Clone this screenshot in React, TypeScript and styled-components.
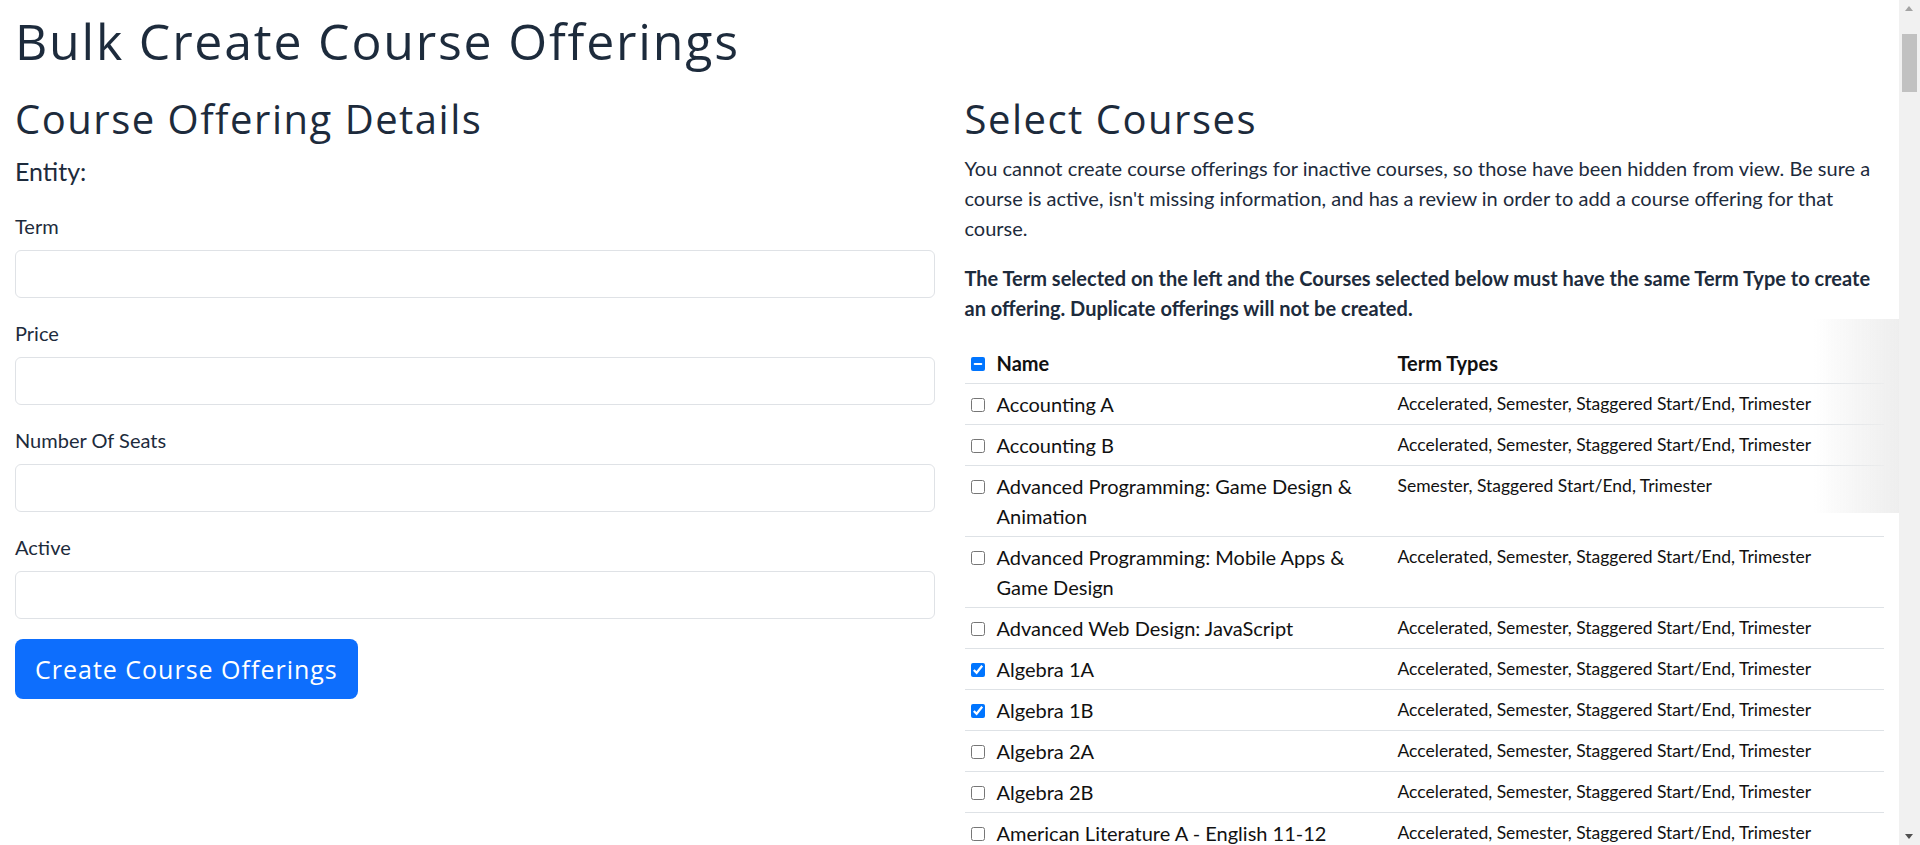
import React from "react";
import styled, { createGlobalStyle } from "styled-components";

const GlobalStyle = createGlobalStyle`
  html, body {
    margin: 0;
    padding: 0;
    overflow: hidden;
    background: #ffffff;
  }
  body {
    font-family: Lato, "Open Sans", sans-serif;
    font-size: 20px;
    line-height: 1.5;
    color: #1d2b3c;
  }
  *, *::before, *::after { box-sizing: border-box; }
`;

const Page = styled.div`
  margin-right: 21px;
  padding: 0 15px;
`;

const Title = styled.h1`
  font-family: "Open Sans", sans-serif;
  font-weight: 500;
  font-size: 50px;
  line-height: 60px;
  letter-spacing: 1.8px;
  margin: 11px 0 24px;
  color: #1d2b3c;
`;

const Columns = styled.div`
  display: grid;
  grid-template-columns: 1fr 1fr;
  column-gap: 30px;
  align-items: start;
`;

const Column = styled.section`
  display: flex;
  flex-direction: column;
  min-width: 0;
`;

const SectionTitle = styled.h2`
  font-family: "Open Sans", sans-serif;
  font-weight: 500;
  font-size: 40px;
  line-height: 48px;
  letter-spacing: 1.5px;
  margin: 0 0 10px;
  color: #1d2b3c;
`;

const EntityLine = styled.div`
  font-size: 25px;
  line-height: 1.5;
  margin-bottom: 20px;
`;

const Field = styled.div`
  display: flex;
  flex-direction: column;
  margin-bottom: 20px;
`;

const Label = styled.label`
  font-size: 20px;
  line-height: 30px;
  margin-bottom: 9px;
`;

const TextInput = styled.input`
  height: 48px;
  width: 100%;
  border: 1px solid #dfe2e6;
  border-radius: 6px;
  background: #fff;
  padding: 0 15px;
  font-family: Lato, sans-serif;
  font-size: 20px;
  outline: none;
`;

const PrimaryButton = styled.button`
  align-self: flex-start;
  height: 60px;
  padding: 0 20px;
  border: none;
  border-radius: 8px;
  background: #0d6efd;
  color: #ffffff;
  font-family: "Open Sans", sans-serif;
  font-size: 25px;
  letter-spacing: 1px;
  font-weight: 400;
  cursor: pointer;
`;

const Paragraph = styled.p<{ $bold?: boolean }>`
  margin: 0 0 20px;
  font-size: 20px;
  line-height: 30px;
  font-weight: ${(p) => (p.$bold ? 700 : 400)};
`;

const Table = styled.table`
  width: 100%;
  border-collapse: collapse;
  color: #111111;
`;

const HeadCell = styled.th<{ $width?: number }>`
  text-align: left;
  font-weight: 700;
  font-size: 20px;
  line-height: 30px;
  padding: 5px;
  border-bottom: 1px solid #dee2e6;
  vertical-align: top;
  width: ${(p) => (p.$width ? `${p.$width}px` : "auto")};
`;

const Cell = styled.td<{ $small?: boolean }>`
  padding: 5px;
  border-bottom: 1px solid #dee2e6;
  vertical-align: top;
  font-size: ${(p) => (p.$small ? "17.5px" : "20px")};
  line-height: 30px;
`;

const CheckRow = styled.label`
  display: flex;
  align-items: flex-start;
  gap: 12px;
`;

const Check = styled.input`
  width: 14px;
  height: 14px;
  margin: 9px 0 0 1px;
  flex: none;
`;

const Shade = styled.div`
  position: fixed;
  right: 21px;
  top: 319px;
  width: 85px;
  height: 194px;
  pointer-events: none;
  background: linear-gradient(to right, rgba(238, 238, 238, 0) 0%, rgba(238, 238, 238, 0.5) 45%, #eeeeee 100%);
`;

const ScrollTrack = styled.div`
  position: fixed;
  top: 0;
  right: 0;
  width: 21px;
  height: 100vh;
  background: #f1f1f1;
`;

const ScrollThumb = styled.div`
  position: absolute;
  top: 34px;
  left: 3px;
  width: 15px;
  height: 58px;
  background: #c1c1c1;
`;

const Arrow = styled.div<{ $down?: boolean }>`
  position: absolute;
  left: 6px;
  ${(p) => (p.$down ? "bottom: 6px;" : "top: 6px;")}
  width: 0;
  height: 0;
  border-left: 4.5px solid transparent;
  border-right: 4.5px solid transparent;
  ${(p) =>
    p.$down
      ? "border-top: 5px solid #505050;"
      : "border-bottom: 5px solid #a3a3a3;"}
`;

type Course = { name: string; terms: string; checked?: boolean };

const ALL = "Accelerated, Semester, Staggered Start/End, Trimester";

const courses: Course[] = [
  { name: "Accounting A", terms: ALL },
  { name: "Accounting B", terms: ALL },
  { name: "Advanced Programming: Game Design & Animation", terms: "Semester, Staggered Start/End, Trimester" },
  { name: "Advanced Programming: Mobile Apps & Game Design", terms: ALL },
  { name: "Advanced Web Design: JavaScript", terms: ALL },
  { name: "Algebra 1A", terms: ALL, checked: true },
  { name: "Algebra 1B", terms: ALL, checked: true },
  { name: "Algebra 2A", terms: ALL },
  { name: "Algebra 2B", terms: ALL },
  { name: "American Literature A - English 11-12", terms: ALL },
  { name: "American Literature B - English 11-12", terms: ALL },
  { name: "Anatomy and Physiology A", terms: ALL },
];

const fields = ["Term", "Price", "Number Of Seats", "Active"];

export default function App() {
  return (
    <>
      <GlobalStyle />
      <Page>
        <Title>Bulk Create Course Offerings</Title>
        <Columns>
          <Column>
            <SectionTitle>Course Offering Details</SectionTitle>
            <EntityLine>Entity:</EntityLine>
            {fields.map((f) => (
              <Field key={f}>
                <Label>{f}</Label>
                <TextInput type="text" />
              </Field>
            ))}
            <PrimaryButton type="button">Create Course Offerings</PrimaryButton>
          </Column>
          <Column>
            <SectionTitle>Select Courses</SectionTitle>
            <Paragraph>
              You cannot create course offerings for inactive courses, so those have been hidden from view. Be sure a
              course is active, isn't missing information, and has a review in order to add a course offering for that
              course.
            </Paragraph>
            <Paragraph $bold>
              The Term selected on the left and the Courses selected below must have the same Term Type to create an
              offering. Duplicate offerings will not be created.
            </Paragraph>
            <Table>
              <thead>
                <tr>
                  <HeadCell $width={428}>
                    <CheckRow>
                      <Check
                        type="checkbox"
                        ref={(el) => {
                          if (el) el.indeterminate = true;
                        }}
                      />
                      <span>Name</span>
                    </CheckRow>
                  </HeadCell>
                  <HeadCell>Term Types</HeadCell>
                </tr>
              </thead>
              <tbody>
                {courses.map((c) => (
                  <tr key={c.name}>
                    <Cell>
                      <CheckRow>
                        <Check type="checkbox" defaultChecked={!!c.checked} />
                        <span>{c.name}</span>
                      </CheckRow>
                    </Cell>
                    <Cell $small>{c.terms}</Cell>
                  </tr>
                ))}
              </tbody>
            </Table>
          </Column>
        </Columns>
      </Page>
      <Shade />
      <ScrollTrack>
        <Arrow />
        <ScrollThumb />
        <Arrow $down />
      </ScrollTrack>
    </>
  );
}
